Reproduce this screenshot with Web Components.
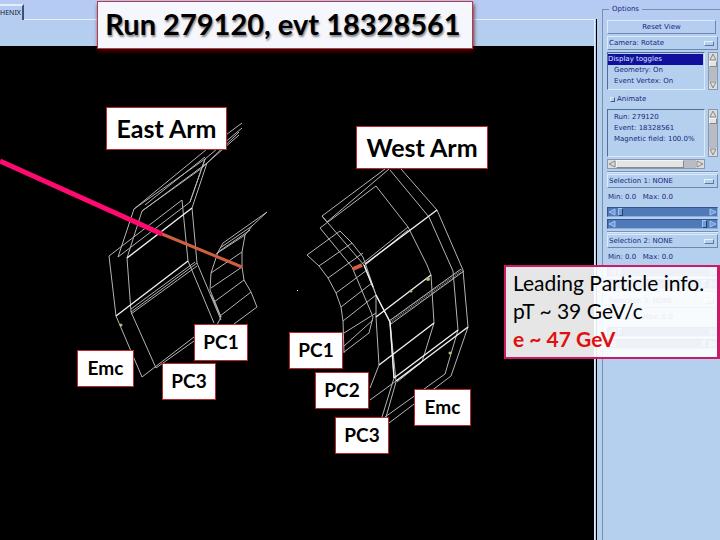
<!DOCTYPE html>
<html lang="en">
<head>
<meta charset="utf-8">
<title>Event display</title>
<style>
html,body{margin:0;height:100%}
body{font-family:Lato,"Liberation Sans",sans-serif;font-variant-ligatures:none;background:#b5d0ee}
</style>
</head>
<body>
<event-viewer>
  <event-scene></event-scene>
  <option-panel slot="side"></option-panel>
  <note-label slot="note" class="title" style="left:97px;top:1px">Run 279120, evt 18328561</note-label>
  <note-label slot="note" class="arm" style="left:106px;top:107px">East Arm</note-label>
  <note-label slot="note" class="arm west" style="left:356px;top:126px">West Arm</note-label>
  <note-label slot="note" style="left:194px;top:324px">PC1</note-label>
  <note-label slot="note" class="emc" style="left:77px;top:350px">Emc</note-label>
  <note-label slot="note" style="left:162px;top:363px">PC3</note-label>
  <note-label slot="note" style="left:289px;top:332px">PC1</note-label>
  <note-label slot="note" style="left:315px;top:372px">PC2</note-label>
  <note-label slot="note" style="left:335px;top:417px">PC3</note-label>
  <note-label slot="note" class="emc" style="left:414px;top:389px">Emc</note-label>
  <particle-info slot="note" style="left:504px;top:265px"></particle-info>
</event-viewer>
<script>
const define = (name, html, setup) => customElements.define(name, class extends HTMLElement {
  static observedAttributes = ['value'];
  constructor() {
    super();
    this.attachShadow({mode: 'open'}).innerHTML = html;
  }
  connectedCallback() { if (setup) setup(this, this.shadowRoot); }
  attributeChangedCallback() { if (setup && this.isConnected) setup(this, this.shadowRoot); }
});

define('note-label', `<style>
:host{position:absolute;box-sizing:border-box;display:flex;align-items:center;justify-content:center;width:54px;height:37px;background:#fff;border:1px solid #b8282c;color:#000;font-size:19px;line-height:24px;font-weight:700;white-space:nowrap;padding-bottom:2px}
:host(.emc){width:57px}
:host(.arm){width:121px;height:43px;font-size:25px;line-height:32px}
:host(.west){width:132px}
:host(.title){width:376px;height:48px;font-size:29px;line-height:36px;background:#f5f7fd;box-shadow:1px 3px 4px #500c;text-shadow:1px 2px 2px #0007;border-color:#b8384c;padding-right:4px}
</style><slot></slot>`);

define('particle-info', `<style>
:host{position:absolute;box-sizing:border-box;display:block;width:216px;height:94px;border:2px solid #c81b68;border-right-width:3px;background:#ffffffe6;padding:2px 0 0 7px;font-size:21px;line-height:28px;color:#000;white-space:nowrap}
p{margin:0}.e{color:#e01010;font-weight:700}
</style><p>Leading Particle info.</p><p>pT ~ 39 GeV/c</p><p class="e">e ~ 47 GeV</p>`);

define('event-scene', `<style>
:host{display:block;background:#000;overflow:hidden}
svg{display:block;width:100%;height:100%}
.g{fill:none;stroke:#b4b4b4;stroke-width:1}
.b{fill:none;stroke:#f0f0f0;stroke-width:1.4}
</style>
<svg viewBox="0 46 594 494" preserveAspectRatio="xMinYMin meet" role="img" aria-label="Detector arms">
<g class="g">
<path d="M242 123L207 149L134 209L118 257L190 202L205 159M239 132L202 168L142 211L127 258M134 209L205 159L242 128M142 211L207 163L239 135M145 205L205 157"/>
<path d="M207 163L192 208L197 263L221 320M205 159L190 202M182 200L109 256L116 316L142 377L194 337M182 200L188 261L214 323M127 258L131 312L156 368L194 341M197 263L131 312M195 262L131 309M197 266L131 314"/>
<path d="M267 212L252 226L245 235L242 252L242 267L244 280L251 292L257 307L234 324M267 212L223 243L218 252L211 273L210 290L215 302L221 317L217 325M252 226L220 248M250 230L218 252M245 235L216 254M242 252L211 273M242 267L211 288M244 280L214 302M251 292L220 316M211 295L221 317"/>
<path d="M385 169L322 216L327 222L389 169M390 170L429 217L453 271L458 330L445 374L385 417M401 169L437 210L463 270L468 327L451 376L389 423M376 186L320 228L352 267L373 317L369 333M376 186L408 227L427 265L431 275L434 323L422 362L397 382M322 216L364 265L376 295L390 322L394 378L382 417M408 227L362 264M408 230L364 266"/>
<path d="M340 231L307 255L319 266L328 278L336 293L341 307L343 321L344 353M340 231L352 243L363 257L372 283L376 295L376 317L379 365L370 388M352 243L319 266M363 253L328 278M367 270L336 293M372 283L341 307M376 295L343 321M376 313L344 333M373 320L344 346M369 333L344 352M370 400L422 362M396 382L386 417M390 322L396 381"/>
<path stroke-width="3" stroke="#707070" stroke-dasharray="1 1" d="M390 322L463 270"/>
<path d="M389 321L461 269M391 324L464 271"/>
</g>
<g class="b"><path d="M192 208L127 258M188 261L116 316M437 210L365 264M431 275L376 317M434 323L379 365M458 330L394 378M468 327L396 381M364 265L373 287M376 295L390 322L394 378"/></g>
<path d="M162 234L242 267" stroke="#d05f40" stroke-width="3"/>
<path d="M0 161L162 234" stroke="#ff0a70" stroke-width="5"/>
<path d="M353 269L362 265" stroke="#d05f40" stroke-width="4"/>
<g fill="#b0c070"><circle cx="121" cy="325" r="1.5"/><circle cx="428" cy="279" r="2"/><circle cx="411" cy="291" r="1.5"/><circle cx="450" cy="353" r="1.5"/></g>
<rect x="297" y="290" width="1" height="1" fill="#fff"/>
</svg>`);

define('event-viewer', `<style>
:host{display:grid;grid-template-columns:minmax(0,1fr) 126px;min-height:100vh;position:relative;overflow:hidden;background:linear-gradient(#b6caf4,#b5d0ee 50px)}
main{display:grid;grid-template-rows:20px 26px minmax(0,1fr);min-width:0}
.tabs{display:flex;align-items:stretch}
button{all:unset;box-sizing:border-box;width:24px;margin-top:4px;border-top:2px solid #e4effc;border-right:2px solid #405070;font:7px/14px "Noto Sans",sans-serif;color:#101828;white-space:nowrap}
.edge{flex:1;border-bottom:1px solid #e8f0fc}
</style>
<main><div class="tabs"><button type="button">HENIX</button><div class="edge"></div></div><div></div><slot></slot></main>
<slot name="side"></slot><slot name="note"></slot>`);

define('scroll-bar', `<style>
:host{display:flex;flex-direction:column;box-sizing:border-box;width:10px;background:#b8bcc4;border:1px solid #8898b0}
:host([horizontal]){flex-direction:row;width:auto;height:10px}
svg{flex:none;width:8px;height:8px;background:#dcdcdc}
i{flex:0 0 6px;background:#e4e4e4;border:1px solid;border-color:#f4f4f4 #888 #888 #f4f4f4;box-sizing:border-box}
:host([horizontal]) i{flex:0 0 68px}
span{flex:1}
</style>
<svg viewBox="0 0 8 8"><path class="a" fill="#ddd" stroke="#888"/></svg><i></i><span></span><svg viewBox="0 0 8 8"><path class="z" fill="#ddd" stroke="#888"/></svg>`,
(el, root) => {
  const h = el.hasAttribute('horizontal');
  root.querySelector('.a').setAttribute('d', h ? 'M7 1L1 4L7 7Z' : 'M1 7L4 1L7 7Z');
  root.querySelector('.z').setAttribute('d', h ? 'M1 1L7 4L1 7Z' : 'M1 1L4 7L7 1Z');
});

define('range-bar', `<style>
:host{display:flex;box-sizing:border-box;height:10px;background:#5079b8;border:1px solid;border-color:#34558c #8aaee0 #8aaee0 #34558c}
svg{flex:none;width:8px;height:8px}
input{appearance:none;-webkit-appearance:none;flex:1;min-width:0;margin:0;height:8px;background:transparent}
input::-webkit-slider-thumb{-webkit-appearance:none;width:5px;height:8px;background:#739ad4;border:1px solid;border-color:#a4c4f0 #24406c #24406c #a4c4f0}
</style>
<svg viewBox="0 0 8 8"><path d="M7 1L1 4L7 7Z" fill="#739ad4" stroke="#a4c4f0"/></svg><input type="range" min="0" max="100"><svg viewBox="0 0 8 8"><path d="M1 1L7 4L1 7Z" fill="#739ad4" stroke="#a4c4f0"/></svg>`,
(el, root) => {
  const input = root.querySelector('input');
  input.value = el.getAttribute('value');
  input.setAttribute('aria-label', el.getAttribute('label'));
});

define('option-menu', `<style>
:host{display:flex;align-items:center;box-sizing:border-box;height:14px;border:1px solid;border-color:#dceafc #6c88b0 #6c88b0 #dceafc}
select{appearance:none;-webkit-appearance:none;flex:1;min-width:0;height:12px;border:0;background:none;padding:0 1px;margin:0;font:inherit;color:inherit}
i{flex:none;width:10px;height:5px;margin-right:3px;box-sizing:border-box;border:1px solid;border-color:#e8f2ff #5c78a0 #5c78a0 #e8f2ff}
</style><select><option></option></select><i></i>`,
(el, root) => {
  const value = el.getAttribute('value') || '';
  root.querySelector('option').textContent = value;
  root.querySelector('select').setAttribute('aria-label', value);
});

define('selection-group', `<style>
:host{display:flex;flex-direction:column;gap:2px;border-top:1px solid #7890b4;box-shadow:inset 0 1px #dceafc;padding-top:2px}
p{margin:0;line-height:15px;padding-left:1px;white-space:pre}
</style><option-menu></option-menu><p>Min: 0.0   Max: 0.0</p><range-bar value="2" label="Minimum"></range-bar><range-bar value="98" label="Maximum"></range-bar>`,
(el, root) => root.querySelector('option-menu').setAttribute('value', 'Selection ' + el.getAttribute('number') + ': NONE'));

define('option-panel', `<style>
:host{display:grid;grid-template-rows:4px 1fr;font:7px/11px "DejaVu Sans",sans-serif;color:#18287c;padding-left:8px;background:linear-gradient(#000,#000) 2px 19px/1px 100% no-repeat,linear-gradient(#e0ecfc,#e0ecfc) 0 19px/1px 100% no-repeat}
fieldset{grid-row:2;min-width:0;margin:0;border:solid #7890a8;border-width:1px 0 0 1px;padding:0 2px 0 4px}
legend{padding:0 3px;margin-left:2px;height:11px;line-height:11px}
.stack{display:flex;flex-direction:column;gap:2px;padding-top:5px}
.reset{font:inherit;line-height:11px;color:inherit;height:14px;padding:0;margin-right:2px;background:none;border:1px solid;border-color:#dceafc #6c88b0 #6c88b0 #dceafc}
.row{display:grid;grid-template-columns:minmax(0,1fr) 10px;gap:3px}
.box{box-sizing:border-box;border:1px solid;border-color:#506c98 #dceafc #dceafc #506c98;margin:0;padding:1px 0 0;list-style:none;white-space:nowrap;overflow:hidden}
.list{height:38px}.list li{padding-left:6px;line-height:11px}.list .on{background:#10109c;color:#dce8ff;padding-left:0;margin-right:1px}
.text{height:48px;padding:2px 0 0 6px}.text div{line-height:11px}
label{display:flex;align-items:center;gap:2px;height:15px;padding-left:3px}
input{appearance:none;-webkit-appearance:none;margin:0;width:5px;height:5px;border:1px solid;border-color:#dceafc #405c88 #405c88 #dceafc}
scroll-bar[horizontal]{margin-right:13px}
</style>
<fieldset><legend>Options</legend><div class="stack">
<button class="reset" type="button">Reset View</button>
<option-menu value="Camera: Rotate"></option-menu>
<div class="row"><ul class="box list" role="listbox" aria-label="Display toggles"><li class="on" role="option" aria-selected="true">Display toggles</li><li role="option">Geometry: On</li><li role="option">Event Vertex: On</li></ul><scroll-bar></scroll-bar></div>
<label><input type="checkbox">Animate</label>
<div class="row"><div class="box text"><div>Run: 279120</div><div>Event: 18328561</div><div>Magnetic field: 100.0%</div></div><scroll-bar></scroll-bar></div>
<scroll-bar horizontal></scroll-bar>
<selection-group number="1"></selection-group><selection-group number="2"></selection-group><selection-group number="3"></selection-group>
</div></fieldset>`);
</script>
</body>
</html>
